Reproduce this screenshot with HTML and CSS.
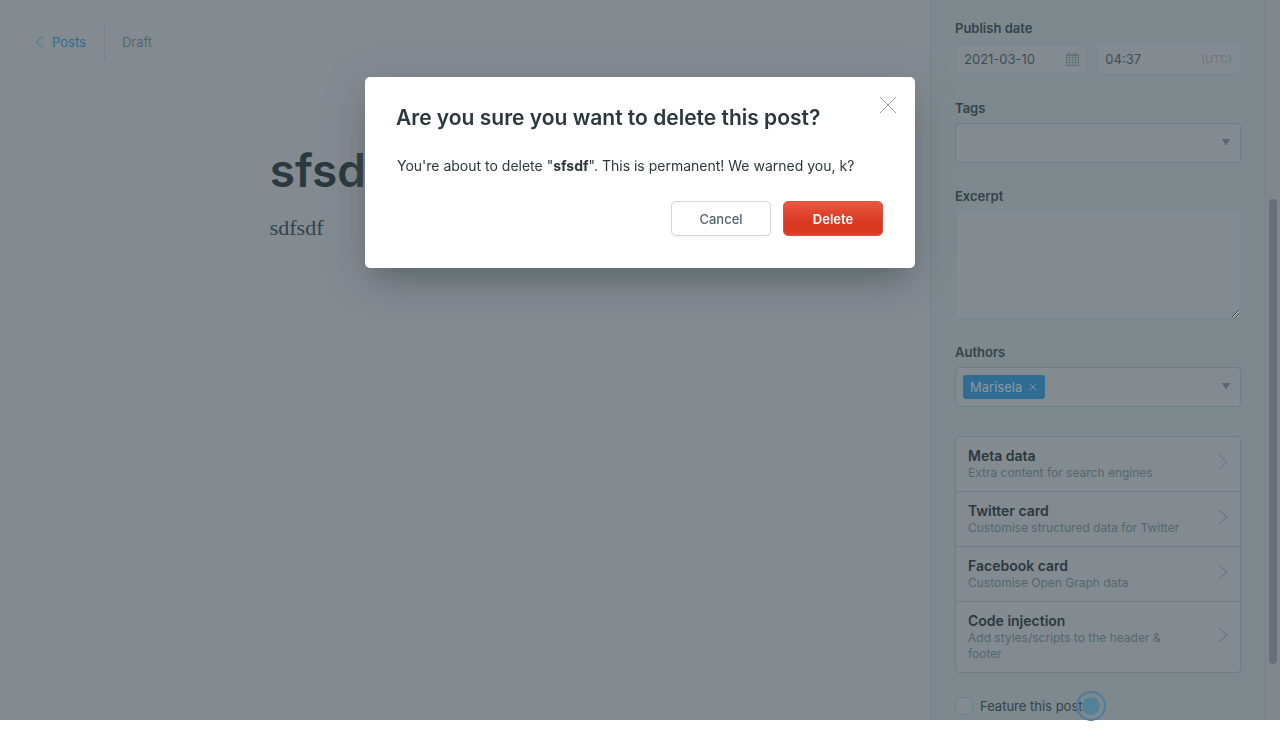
FILE: index.html
```html
<!DOCTYPE html>
<html lang="en">
<head>
<meta charset="utf-8">
<title>Edit post</title>
<link rel="stylesheet" href="styles.css">
</head>
<body>
<div class="app">
  <main class="editor">
    <header class="topbar">
      <a class="back" href="#"><svg width="9" height="14" viewBox="0 0 9 14" fill="none" stroke="currentColor" stroke-width=".8"><path d="M8 1 1.500 7 8 13"/></svg>Posts</a>
      <span class="status">Draft</span>
    </header>
    <article class="post">
      <h1 class="post-title">sfsdf</h1>
      <p class="post-body">sdfsdf</p>
    </article>
  </main>
  <aside class="sidebar">
    <div class="group">
      <label class="label" for="date">Publish date</label>
      <div class="datetime">
        <div class="field date">
          <input id="date" type="text" value="2021-03-10">
          <svg width="13" height="14" viewBox="0 0 13 14" fill="none" stroke="currentColor"><path d="M.5 2.500h12v11H.5zM1 3.500h11M3.500 0v3M9.500 0v3"/><path stroke-width=".7" d="M.5 5.500h12M.5 8h12M.5 10.500h12M3.500 4.500v9M6.500 4.500v9M9.500 4.500v9"/></svg>
        </div>
        <div class="field time">
          <input type="text" value="04:37" aria-label="Publish time">
          <small class="zone">(UTC)</small>
        </div>
      </div>
    </div>
    <div class="group">
      <label class="label" for="tags">Tags</label>
      <select class="picker tags" id="tags"><option></option></select>
    </div>
    <div class="group">
      <label class="label" for="excerpt">Excerpt</label>
      <textarea class="excerpt" id="excerpt"></textarea>
    </div>
    <div class="group">
      <label class="label" for="authors">Authors</label>
      <div class="picker authors">
        <span class="chip">Marisela<button type="button" class="chip-remove" aria-label="Remove Marisela"><svg width="8" height="8" viewBox="0 0 8 8" stroke="currentColor" stroke-width=".8"><path d="M.5.5l7 7M7.500.5l-7 7"/></svg></button></span>
        <input id="authors" type="text">
      </div>
    </div>
    <nav class="panels">
      <button type="button" class="panel"><span class="panel-text"><b>Meta data</b><span>Extra content for search engines</span></span><svg width="10" height="16" viewBox="0 0 10 16" fill="none" stroke="currentColor" stroke-width=".8"><path d="M1 1l8 7-8 7"/></svg></button>
      <button type="button" class="panel"><span class="panel-text"><b>Twitter card</b><span>Customise structured data for Twitter</span></span><svg width="10" height="16" viewBox="0 0 10 16" fill="none" stroke="currentColor" stroke-width=".8"><path d="M1 1l8 7-8 7"/></svg></button>
      <button type="button" class="panel"><span class="panel-text"><b>Facebook card</b><span>Customise Open Graph data</span></span><svg width="10" height="16" viewBox="0 0 10 16" fill="none" stroke="currentColor" stroke-width=".8"><path d="M1 1l8 7-8 7"/></svg></button>
      <button type="button" class="panel"><span class="panel-text"><b>Code injection</b><span>Add styles/scripts to the header &amp; footer</span></span><svg width="10" height="16" viewBox="0 0 10 16" fill="none" stroke="currentColor" stroke-width=".8"><path d="M1 1l8 7-8 7"/></svg></button>
    </nav>
    <label class="feature"><input type="checkbox">Feature this post</label>
  </aside>
  <div class="scrollbar"><div class="thumb"></div></div>
  <span class="pointer"></span>
</div>
<div class="overlay">
  <section class="modal" role="dialog" aria-modal="true" aria-labelledby="modal-title">
    <header class="modal-head">
      <h2 id="modal-title">Are you sure you want to delete this post?</h2>
      <button type="button" class="close" aria-label="Close"><svg width="18" height="18" viewBox="0 0 18 18" stroke="currentColor" stroke-width=".8"><path d="M1 1l16 16M17 1L1 17"/></svg></button>
    </header>
    <p class="modal-text">You're about to delete "<b>sfsdf</b>". This is permanent! We warned you, k?</p>
    <footer class="actions">
      <button type="button" class="btn cancel">Cancel</button>
      <button type="button" class="btn delete">Delete</button>
    </footer>
  </section>
</div>
</body>
</html>
```
FILE: styles.css
```css
* { box-sizing: border-box; }

body {
  margin: 0;
  height: 100vh;
  padding-bottom: 11px;
  overflow: hidden;
  background: #fff;
  color: #2b383e;
  font: 13px/20px Inter, "Liberation Sans", sans-serif;
}

button, input, select, textarea { font: inherit; color: inherit; }
button { cursor: pointer; }
svg { display: block; flex: none; }

.app {
  position: relative;
  display: flex;
  height: 100%;
  background: #838b91;
}

.editor { flex: 1; min-width: 0; }

.topbar {
  display: flex;
  align-items: center;
  height: 36px;
  margin: 24px 35px 0;
}

.back {
  display: flex;
  align-items: center;
  gap: 8px;
  height: 36px;
  padding-right: 18px;
  border-right: 1px solid #748389;
  color: #2e6d91;
  text-decoration: none;
}

.status { padding-left: 17px; color: #53666f; }

.post { padding: 80px 0 0 29%; }

.post-title {
  margin: 0;
  font-size: 46px;
  line-height: 60px;
  font-weight: 600;
}

.post-body {
  margin: 12px 0 0;
  color: #33424a;
  font: 22px/32px "Liberation Serif", serif;
}

.sidebar {
  width: 336px;
  padding: 18px 24px 0;
  overflow: hidden;
  background: #7d898d;
  border: solid #73838a;
  border-width: 0 1px;
}

.group { margin-bottom: 23px; }

.label {
  display: block;
  margin-bottom: 5px;
  color: #33434b;
  font-weight: 600;
}

.datetime { display: flex; align-items: center; gap: 8px; }

.field {
  display: flex;
  align-items: center;
  height: 32px;
  padding: 0 8px;
  background: #838b91;
  border: 1px solid #76868d;
  border-radius: 4px;
  color: #3d4d55;
}

.date { flex: 132; height: 30px; min-width: 0; }
.time { flex: 145; min-width: 0; }
.date svg { color: #61727a; }

.field input, .authors input {
  flex: 1;
  width: 0;
  min-width: 0;
  padding: 0;
  border: 0;
  outline: 0;
  background: none;
}

.zone { color: #67767e; font-size: 11px; }

/* Box with a drop-down triangle at its right end */
.picker {
  display: flex;
  align-items: center;
  width: 100%;
  height: 40px;
  padding: 0 7px;
  border: 1px solid #6c7e85;
  border-radius: 4px;
  appearance: none;
  background: #838b91 conic-gradient(from -30deg at 50% 100%, #5f676e 60deg, transparent 0) right 10px top 15px / 8px 7px no-repeat;
}

.chip {
  display: flex;
  align-items: center;
  gap: 7px;
  height: 24px;
  padding: 0 8px 0 7px;
  border-radius: 3px;
  background: #2f6c91;
  color: #8d9aa3;
}

.chip-remove { padding: 0; border: 0; background: none; }

.excerpt {
  display: block;
  width: 100%;
  height: 108px;
  border: 1px solid #76868d;
  border-radius: 4px;
  background: #838b91;
}

.panels {
  margin-top: 29px;
  border: 1px solid #6c7e85;
  border-radius: 4px;
  background: #838b91;
}

.panel {
  display: flex;
  align-items: center;
  justify-content: space-between;
  width: 100%;
  padding: 10px 12px;
  border: 0;
  background: none;
  color: #53666f;
  text-align: left;
}

.panel + .panel { border-top: 1px solid #6c7e85; }
.panel svg { margin-bottom: 4px; }
.panel-text { max-width: 224px; font-size: 12px; line-height: 16px; }
.panel-text > * { display: block; }
.panel-text b { color: #2b383e; font-size: 14px; line-height: 18px; font-weight: 600; }

.feature {
  display: flex;
  align-items: center;
  gap: 7px;
  margin-top: 23px;
  color: #33434b;
}

.feature input {
  appearance: none;
  width: 18px;
  height: 18px;
  margin: 0;
  border: 1px solid #6f8289;
  border-radius: 4px;
  background: #838b91;
}

.scrollbar { width: 14px; padding: 199px 3px 56px; background: #80888e; }
.thumb { height: 100%; border-radius: 4px; background: #686f77; }

/* Pointer highlight over the page */
.pointer {
  position: absolute;
  right: 174px;
  bottom: -1px;
  width: 30px;
  height: 30px;
  padding: 4px;
  border: 2px solid #4b7c9f;
  border-radius: 50%;
  background: #54809a content-box;
}

.overlay {
  position: fixed;
  inset: 0;
  display: flex;
  justify-content: center;
  align-items: flex-start;
  padding: 77px 20px 0;
}

.modal {
  width: 100%;
  max-width: 550px;
  padding: 18px 32px 32px 31px;
  border-radius: 5px;
  background: #fff;
  box-shadow: 0 18px 30px -10px rgba(70, 82, 80, .6), 0 8px 40px rgba(90, 100, 105, .3);
}

.modal-head { display: flex; justify-content: space-between; align-items: flex-start; }

.modal h2 {
  margin: 8px 0 0;
  font-size: 21px;
  line-height: 30px;
  font-weight: 600;
}

.close {
  margin: 1px -14px 0 0;
  padding: 0;
  border: 0;
  background: none;
  color: #808488;
}

.modal-text { margin: 22px 1px 25px; font-size: 14px; line-height: 21px; }

.actions { display: flex; justify-content: flex-end; gap: 12px; }

.btn {
  width: 100px;
  height: 35px;
  padding: 0;
  border: 1px solid #ced9e0;
  border-radius: 5px;
  background: #fff;
}

.cancel { color: #54666d; box-shadow: 0 1px 2px rgba(0, 0, 0, .06); font-weight: 500; }

.delete {
  border-color: #e2513d;
  background: linear-gradient(#ea573f, #d93821 60%, #d93821 90%, #de432d);
  color: #fff;
  font-weight: 600;
}
```
